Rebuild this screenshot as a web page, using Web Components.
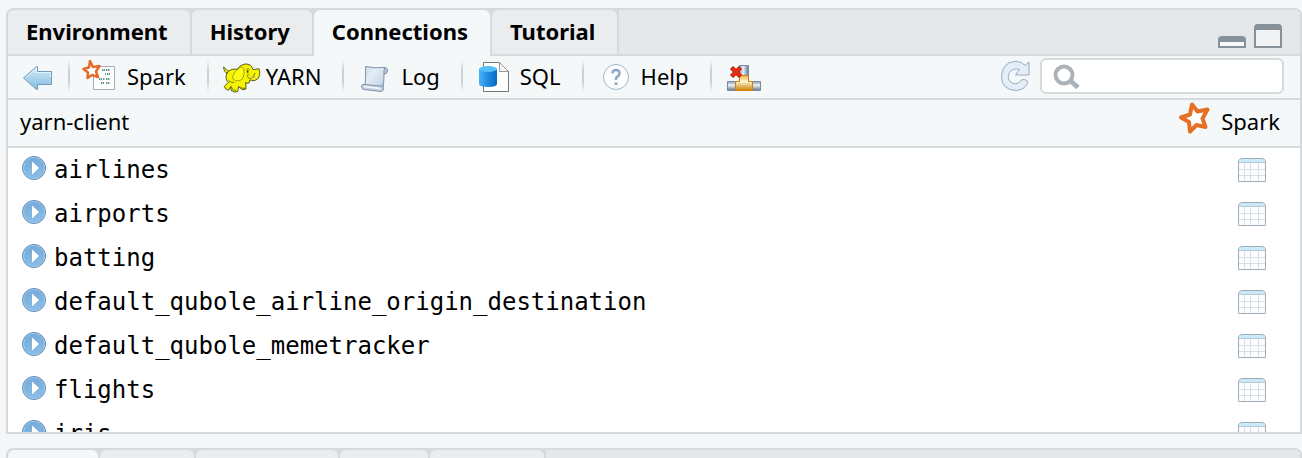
<!DOCTYPE html>
<html lang="en">
<head>
<meta charset="utf-8">
<title>Connections</title>
<style>
html, body { margin: 0; }
body {
  box-sizing: border-box; height: 100vh; overflow: hidden;
  background: #f5f7f9; color: #000;
  font: 22px/28px "Noto Sans", "Open Sans", sans-serif;
}
</style>
</head>
<body>
<rs-workbench></rs-workbench>
<script>
// Each icon: [width, height, drawing]
const ICONS = {
  back: [60, 42, `<defs><linearGradient id="g" x2="0" y2="1"><stop stop-color="#d5ebf7"/><stop offset="1" stop-color="#84bde2"/></linearGradient></defs>
    <path d="M15.500 23 28.500 11.500H29.500V16.500H43.500V29.500H29.500V34.500H28.500Z" fill="url(#g)" stroke="#6f9cbc"/><path d="M17.500 23 28.500 13.500V17.500H42.500V22" fill="none" stroke="#e6f5fc"/>`],
  spark: [57, 42, `<path d="M23.500 11.500h21v23h-21z" fill="#fff" stroke="#a3afb9"/>
    <path d="M32 15h3m1 0h4M35 19h1m1 0h3M29 24h3m1 0h2m1 0h4M31 28h3m2 0h4" stroke="#6f9494" stroke-width="2" stroke-dasharray="1.500 .5"/>
    <path d="M20 6 23 12 29.500 11 26 16.500 28 22 22 20 17.500 23 18 17.500 13.500 14 19 12.500Z" fill="#fff" stroke="#e66a27" stroke-width="2.500" stroke-linejoin="round"/>`],
  yarn: [57, 42, `<g transform="translate(-208 -56) scale(.33333)" stroke="#3f3d10" stroke-width="2.500" stroke-linejoin="round" stroke-linecap="round">
    <path d="M680 224q-12-4-12-20 8 9 16 13" fill="#f3f311"/>
    <path d="M678 222Q688 207 708 211Q716 198 732 195Q752 194 756 212Q768 210 774 209Q780 228 770 240Q760 249 747 243L744 252Q737 255 734 250L735 270Q726 276 718 268L713 262L710 278Q699 282 690 274L690 262L682 274Q671 270 670 262L682 250Q670 240 678 222Z" fill="#f4f400"/>
    <path d="M710 211Q696 220 695 239Q710 252 724 240Q733 225 728 208Q720 200 710 211Z" fill="#fbfb16" stroke="#7d7b10" stroke-width="2"/>
    <path d="M737 211q5-5 8 1M741 226q-5 8 4 13 12-1 17-16M692 266q3 9 12 9M719 265q6 5 12 3M684 246q9 7 15 4" fill="none" stroke-width="2"/>
    <path d="M740 216v3" stroke-width="5"/><path d="M752 237q8 2 13-5" stroke="#f8f8d0"/></g>`],
  log: [57, 42, `<defs><linearGradient id="g" x2="1" y2="1"><stop stop-color="#cbd8e6"/><stop offset=".35" stop-color="#e4edf6"/><stop offset=".75" stop-color="#cddbe9"/><stop offset="1" stop-color="#90a5bd"/></linearGradient></defs>
    <path d="M39 12.500Q44 12 43.500 16Q43 19.500 40 19Z" fill="#b7c6d7" stroke="#8193a9"/>
    <path d="M21.500 11.500Q31 13.500 41.500 12.500Q39.500 14 40 20Q40 27 39 33H21Q22 20 21.500 11.500Z" fill="url(#g)" stroke="#8193a9"/>
    <path d="M21 29.500Q18 28.500 17.500 31Q17.500 34 20 34.500L37 36.500Q40 36 39.500 33Q39 31 36 31Z" fill="#c5d2e0" stroke="#8193a9"/><path d="M20 31.500 36 33.500" stroke="#f2f6fa" stroke-width="1.500"/>`],
  sql: [57, 42, `<defs><linearGradient id="g"><stop stop-color="#48b3f8"/><stop offset=".5" stop-color="#208be0"/><stop offset="1" stop-color="#0869c4"/></linearGradient></defs>
    <path d="M20.500 7.500h16l9 9v20h-25z" fill="#fff" stroke="#777"/><path d="M36.500 7.500v9h9z" fill="#f5f5f5" stroke="#999"/>
    <path d="M16 14v15q0 3 9 3t9-3V14z" fill="url(#g)"/><ellipse cx="25" cy="14" rx="9" ry="3" fill="#52c1fa"/>`],
  help: [57, 42, `<circle cx="32" cy="22" r="12.500" fill="#fcfdff" stroke="#9db5cf"/><path d="M28.500 18.500q0-3.500 3.500-3.500t3.500 3.500q0 1.500-2 3t-1.500 3.500" fill="none" stroke="#92a8c6" stroke-width="2.500"/><path d="M30.500 27.500h3v2.500h-3z" fill="#92a8c6"/>`],
  disconnect: [57, 42, `<defs><linearGradient id="g" x2="0" y2="1"><stop stop-color="#8797b2"/><stop offset=".4" stop-color="#eef2f7"/><stop offset="1" stop-color="#64748e"/></linearGradient><linearGradient id="h"><stop stop-color="#8797b2"/><stop offset=".4" stop-color="#eef2f7"/><stop offset="1" stop-color="#64748e"/></linearGradient><linearGradient id="o" x2="0" y2="1"><stop stop-color="#eab64b"/><stop offset=".4" stop-color="#fff4cf"/><stop offset="1" stop-color="#cc8000"/></linearGradient></defs>
    <path d="M27.500 10.500h9v11h-9z" fill="url(#h)" stroke="#7889a5"/><path d="M15.500 26.500h33v9h-33z" fill="url(#g)" stroke="#7889a5"/>
    <path d="M27.500 20.500h9v6h4v9h-17v-9h4z" fill="url(#o)" stroke="#c98205"/><path d="M19.500 12.500l9 9m0-9l-9 9" stroke="#a91f0b" stroke-width="4.500"/><path d="M20 13l8 8m0-8l-8 8" stroke="#ef2b0d" stroke-width="3"/>`],
  refresh: [30, 32, `<path d="M29 2V15H15.500L19.500 9.500Q13 7.500 9.500 12.500Q6.500 18 10.500 22Q16 26 20 21.500Q21 19.500 23 19.500Q27 19.500 28 22Q25 30 16 30.500Q2 30 1.500 17Q2 3 14 1.500Q21 1 25 5.500Z" fill="#e4edfa" stroke="#9ca8b7"/>`],
  search: [28, 26, `<circle cx="11" cy="11" r="8.500" fill="none" stroke="#abb3b8" stroke-width="4"/><path d="M16.500 16 25 23.500" stroke="#abb3b8" stroke-width="5"/>`],
  star: [36, 36, `<path d="M15 4.500 20.500 11.500 30.500 9.500 25.500 18.500 28.500 27 19.500 25 13 31.500 12 22 4 17.500 13 14.500Z" fill="#fff" stroke="#e66f25" stroke-width="4" stroke-linejoin="round"/>`],
  expand: [24, 24, `<defs><linearGradient id="g" x2="0" y2="1"><stop stop-color="#75a9d8"/><stop offset="1" stop-color="#8cbde7"/></linearGradient></defs><circle cx="12" cy="12" r="11.500" fill="url(#g)" stroke="#5d8db9"/><circle cx="12" cy="12" r="10.500" fill="none" stroke="#a1c9eb"/><path d="M10 5.500V18.500L17 12Z" fill="#fff"/>`],
  table: [28, 24, `<path d="M.5 23.500V4Q.5.5 4 .5H24Q27.500.5 27.500 4V23.500Z" fill="#fcfdfe"/><path d="M1 4.500Q1 1 4 1H24Q27 1 27 4.500Z" fill="#c9ebf8"/><path d="M6.500 5v18M12.500 5v18M20.500 5v18M1 11.500h26M1 17.500h26" stroke="#d9dee5"/><path d="M.5 23.500V4Q.5.5 4 .5H24Q27.500.5 27.500 4V23.500Z" fill="none" stroke="#a3adb9"/><path d="M1 4.500H27" stroke="#b9cdd9"/>`],
  minimize: [28, 12, `<path d="M1 4v7h26V4z" fill="#f6f7f8" stroke="#879199" stroke-width="2"/><path d="M0 6V4q0-4 4-4h20q4 0 4 4v2z" fill="#879199"/>`],
  maximize: [28, 24, `<path d="M1 4v19h26V4z" fill="#f1f2f4" stroke="#879199" stroke-width="2"/><path d="M0 6V4q0-4 4-4h20q4 0 4 4v2z" fill="#879199"/>`],
};
const RESET = `:host{display:block} *{box-sizing:border-box}
  button{margin:0;padding:0;border:0;background:none;color:inherit;font:inherit;display:flex;align-items:center;text-align:left;white-space:nowrap}`;
function define(name, render) {
  customElements.define(name, class extends HTMLElement {
    constructor() { super(); this.attachShadow({ mode: 'open' }); }
    connectedCallback() { this.shadowRoot.innerHTML = render(this); }
  });
}
define('rs-icon', el => {
  const [w, h, art] = ICONS[el.getAttribute('name')];
  return `<style>:host{display:block;flex:none}svg{display:block}</style><svg width="${w}" height="${h}" viewBox="0 0 ${w} ${h}" aria-hidden="true">${art}</svg>`;
});
define('rs-tab', () => `<style>${RESET}
  button{height:46px;padding:0 22px 2px 18px;font-weight:700;background:#ebecee;border-bottom:2px solid #d6dadc;border-radius:6px 6px 0 0;width:100%}
  :host([selected]) button{background:#f4f8f9;border-bottom-color:#f4f8f9}
  </style><button role="tab"><slot></slot></button>`);
define('rs-panel', () => `<style>${RESET}
  :host{display:flex;flex-direction:column;min-height:0;border:2px solid #d6dadc;border-radius:7px 7px 0 0;overflow:hidden;background:#fff}
  header{display:flex;flex:none;background:#e6e7e9}
  .tabs{display:flex;gap:2px;padding-right:2px;background:#d6dadc}
  .rest{flex:1;display:flex;justify-content:flex-end;align-items:flex-end;gap:8px;padding:0 18px 6px;border-bottom:2px solid #d6dadc}
  </style><header><div class="tabs" role="tablist"><slot name="tab"></slot></div><div class="rest"><slot name="window"></slot></div></header><slot></slot>`);
define('rs-tool', el => `<style>${RESET}
  :host{display:flex;align-items:center}
  button{height:42px;padding-right:21px}
  i{width:2px;height:32px;background:linear-gradient(#d0d3d500,#cfd2d4 30%,#cfd2d4 70%,#d0d3d500)}
  :host([last]) i{display:none}
  </style><button aria-label="${el.getAttribute('label')}"><rs-icon name="${el.getAttribute('icon')}"></rs-icon><slot></slot></button><i></i>`);
define('rs-search', () => `<style>${RESET}
  :host{position:relative;width:244px}
  input{display:block;width:100%;height:36px;padding:0 10px 0 44px;border:2px solid #d6dadc;border-radius:6px;background:#fff;font:inherit;outline:0}
  rs-icon{position:absolute;left:13px;top:6px;pointer-events:none}
  </style><input type="text" aria-label="Search connections"><rs-icon name="search"></rs-icon>`);
define('rs-toolbar', () => `<style>${RESET}
  :host{display:flex;flex:none;align-items:center;height:44px;background:#f4f8f9;border-bottom:2px solid #d6dadc;padding:0 16px 2px 0}
  .fill{flex:1} .refresh{margin-right:10px}
  i{width:2px;height:32px;background:linear-gradient(#d0d3d500,#cfd2d4 30%,#cfd2d4 70%,#d0d3d500)}
  </style><button class="back" aria-label="Back"><rs-icon name="back"></rs-icon></button><i></i>
  <rs-tool icon="spark" label="Spark">Spark</rs-tool><rs-tool icon="yarn" label="YARN">YARN</rs-tool><rs-tool icon="log" label="Log">Log</rs-tool><rs-tool icon="sql" label="SQL">SQL</rs-tool><rs-tool icon="help" label="Help">Help</rs-tool><rs-tool icon="disconnect" label="Disconnect" last></rs-tool>
  <span class="fill"></span><button class="refresh" aria-label="Refresh"><rs-icon name="refresh"></rs-icon></button><rs-search></rs-search>`);
define('rs-connection', () => `<style>${RESET}
  :host{display:flex;flex:none;justify-content:space-between;height:48px;background:#f4f8f9;border-bottom:2px solid #d6dadc;padding:7px 20px 0 12px}
  div{display:flex;gap:8px} rs-icon{margin-top:-7px}
  </style><slot></slot><div><rs-icon name="star"></rs-icon><slot name="kind"></slot></div>`);
define('rs-row', () => `<style>${RESET}
  :host{display:flex;height:44px;padding:8px 34px 0 14px;font:24px/28px "DejaVu Sans Mono",monospace}
  .name{flex:1;display:flex;align-items:flex-start;gap:8px}
  .view{align-items:flex-start;padding-top:2px}
  </style><button class="name"><rs-icon name="expand"></rs-icon><slot></slot></button><button class="view" aria-label="View table"><rs-icon name="table"></rs-icon></button>`);
define('rs-workbench', () => `<style>${RESET}
  :host{display:flex;flex-direction:column;gap:14px;height:100%;padding:8px 0 0 6px;box-sizing:border-box}
  .main{flex:1} .next{flex:0 0 10px;border-bottom:0}
  .list{flex:1;min-height:0;overflow:hidden}
  .window{display:block}
  .next rs-tab:nth-of-type(1){width:90px}.next rs-tab:nth-of-type(2){width:94px}.next rs-tab:nth-of-type(3){width:142px}.next rs-tab:nth-of-type(4){width:88px}.next rs-tab:nth-of-type(5){width:114px}
  </style>
  <rs-panel class="main">
    <rs-tab slot="tab">Environment</rs-tab><rs-tab slot="tab">History</rs-tab><rs-tab slot="tab" selected>Connections</rs-tab><rs-tab slot="tab">Tutorial</rs-tab>
    <button class="window" slot="window" aria-label="Minimize"><rs-icon name="minimize"></rs-icon></button><button class="window" slot="window" aria-label="Maximize"><rs-icon name="maximize"></rs-icon></button>
    <rs-toolbar></rs-toolbar>
    <rs-connection>yarn-client<span slot="kind">Spark</span></rs-connection>
    <div class="list">${['airlines','airports','batting','default_qubole_airline_origin_destination','default_qubole_memetracker','flights','iris'].map(n => `<rs-row>${n}</rs-row>`).join('')}</div>
  </rs-panel>
  <rs-panel class="next"><rs-tab slot="tab" selected></rs-tab><rs-tab slot="tab"></rs-tab><rs-tab slot="tab"></rs-tab><rs-tab slot="tab"></rs-tab><rs-tab slot="tab"></rs-tab></rs-panel>`);
</script>
</body>
</html>
